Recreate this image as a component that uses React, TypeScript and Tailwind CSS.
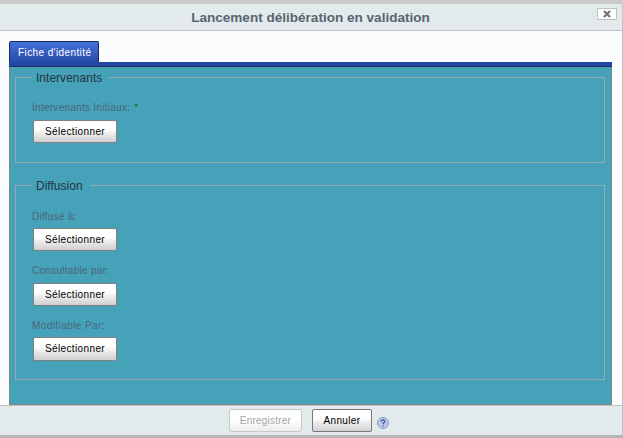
import type { ReactNode } from "react";

function SelectButton({ height = "h-[23px]" }: { height?: string }) {
  return (
    <button className={`ml-px block w-[84px] rounded-[2px] border border-[#808080] bg-linear-to-b from-white from-40% via-[#ececec] via-60% to-[#cfcfd3] text-[10px] leading-[20px] tracking-[0.38px] text-black ${height}`}>
      Sélectionner
    </button>
  );
}

interface FieldProps {
  label: string;
  tracking: string;
  required?: boolean;
  className: string;
  gap?: string;
  buttonHeight?: string;
}

function Field({ label, tracking, required, className, gap = "mb-[6px]", buttonHeight }: FieldProps) {
  return (
    <div className={className}>
      <div className={`h-[12px] text-[10px] leading-[12px] whitespace-nowrap text-[#4c6579] ${tracking} ${gap}`}>
        {label}
        {required && <span className="ml-[4px] text-[#087b20]">*</span>}
      </div>
      <SelectButton height={buttonHeight} />
    </div>
  );
}

function Group({ title, className, children }: { title: string; className: string; children: ReactNode }) {
  return (
    <section className={`flex flex-col border border-t-0 border-[#9aabb0] ${className}`}>
      <div className="flex h-[14px] shrink-0 items-start">
        <span className="h-px w-[16px] bg-[#9aabb0]" />
        <h2 className="-mt-[6px] px-1 text-[12px] leading-[15px] tracking-[0.02px] text-[#25343f]">{title}</h2>
        <span className="ml-[3px] h-px flex-1 bg-[#9aabb0]" />
      </div>
      <div className="pl-[16px]">{children}</div>
    </section>
  );
}

export default function App() {
  return (
    <div className="flex h-[438px] w-[623px] flex-col overflow-hidden bg-[#fbfcfe] font-['Liberation_Sans',Arial,sans-serif]">
      <div className="h-[4px] shrink-0 bg-[#cbcbcb]" />
      <div className="flex h-[431px] flex-col border-r border-[#bfc3c3]">
        <header className="flex h-[27px] shrink-0 border-b border-[#bfc3c3] bg-[#e2eaeb]">
          <h1 className="ml-[24px] flex-1 text-center text-[13.55px] leading-[27px] font-bold text-[#5a6370]">
            Lancement délibération en validation
          </h1>
          <button aria-label="Fermer" className="mt-[4px] mr-[5px] flex h-[12px] w-[20px] items-center justify-center rounded-[1px] border border-[#bfbfbf] bg-white">
            <svg width="8" height="8" viewBox="0 0 8 8" stroke="#707070" strokeWidth="2">
              <path d="M1 1L7 7M7 1L1 7" />
            </svg>
          </button>
        </header>
        <main className="flex flex-1 flex-col pt-[10px] pr-[10px] pl-[9px]">
          <div className="h-[21px] w-[90px] shrink-0 rounded-t-[2px] border border-b-0 border-[#1b2b5c] bg-linear-to-b from-[#4370dc] to-[#274ba8] pl-[8px] text-[10px] leading-[22px] tracking-[0.4px] whitespace-nowrap text-white">
            Fiche d'identité
          </div>
          <div className="h-[5px] shrink-0 border-b border-[#242e5c] bg-[#2348a4]" />
          <div className="flex-1 border border-t-0 border-[#808486] bg-[#45a2b9] pt-[10px] pr-[6px] pl-[5px]">
            <Group title="Intervenants" className="h-[86px]">
              <Field label="Intervenants Initiaux:" tracking="tracking-[0.27px]" required className="mt-[11px]" />
            </Group>
            <Group title="Diffusion" className="mt-[22px] h-[195px]">
              <Field label="Diffusé à:" tracking="tracking-[0.25px]" className="mt-[12px]" gap="mb-[5px]" />
              <Field label="Consultable par:" tracking="tracking-[0.28px]" className="mt-[14px]" />
              <Field label="Modifiable Par:" tracking="tracking-[0.42px]" className="mt-[14px]" gap="mb-[5px]" buttonHeight="h-[24px]" />
            </Group>
          </div>
        </main>
        <footer className="flex h-[30px] shrink-0 border-t border-[#bfc3c3] bg-[#e2eaeb] pt-[3px] pl-[229px]">
          <button disabled className="h-[23px] w-[73px] rounded-[2px] border border-[#c6c9c9] bg-linear-to-b from-white from-45% to-[#ececed] text-[10px] leading-[21px] tracking-[0.22px] text-[#a2a4a6]">
            Enregistrer
          </button>
          <button className="ml-[10px] h-[23px] w-[60px] rounded-[2px] border border-[#77797b] bg-linear-to-b from-white from-40% via-[#ededed] via-60% to-[#d3d3d6] text-[10px] leading-[21px] tracking-[0.35px] text-black">
            Annuler
          </button>
          <svg className="mt-[8px] ml-[5px]" width="12" height="12" viewBox="0 0 12 12" aria-label="Aide">
            <circle cx="6" cy="6" r="5.4" fill="#bccbea" stroke="#8794bd" />
            <path d="M4.2 4.5Q4.4 3 6 3T7.8 4.5Q7.8 5.3 6.8 5.9Q6 6.3 6 7.2M6 8.2V9.4" fill="none" stroke="#405dad" strokeWidth="1.4" />
          </svg>
        </footer>
      </div>
      <div className="h-[3px] shrink-0 bg-[#b6b6b6]" />
    </div>
  );
}
